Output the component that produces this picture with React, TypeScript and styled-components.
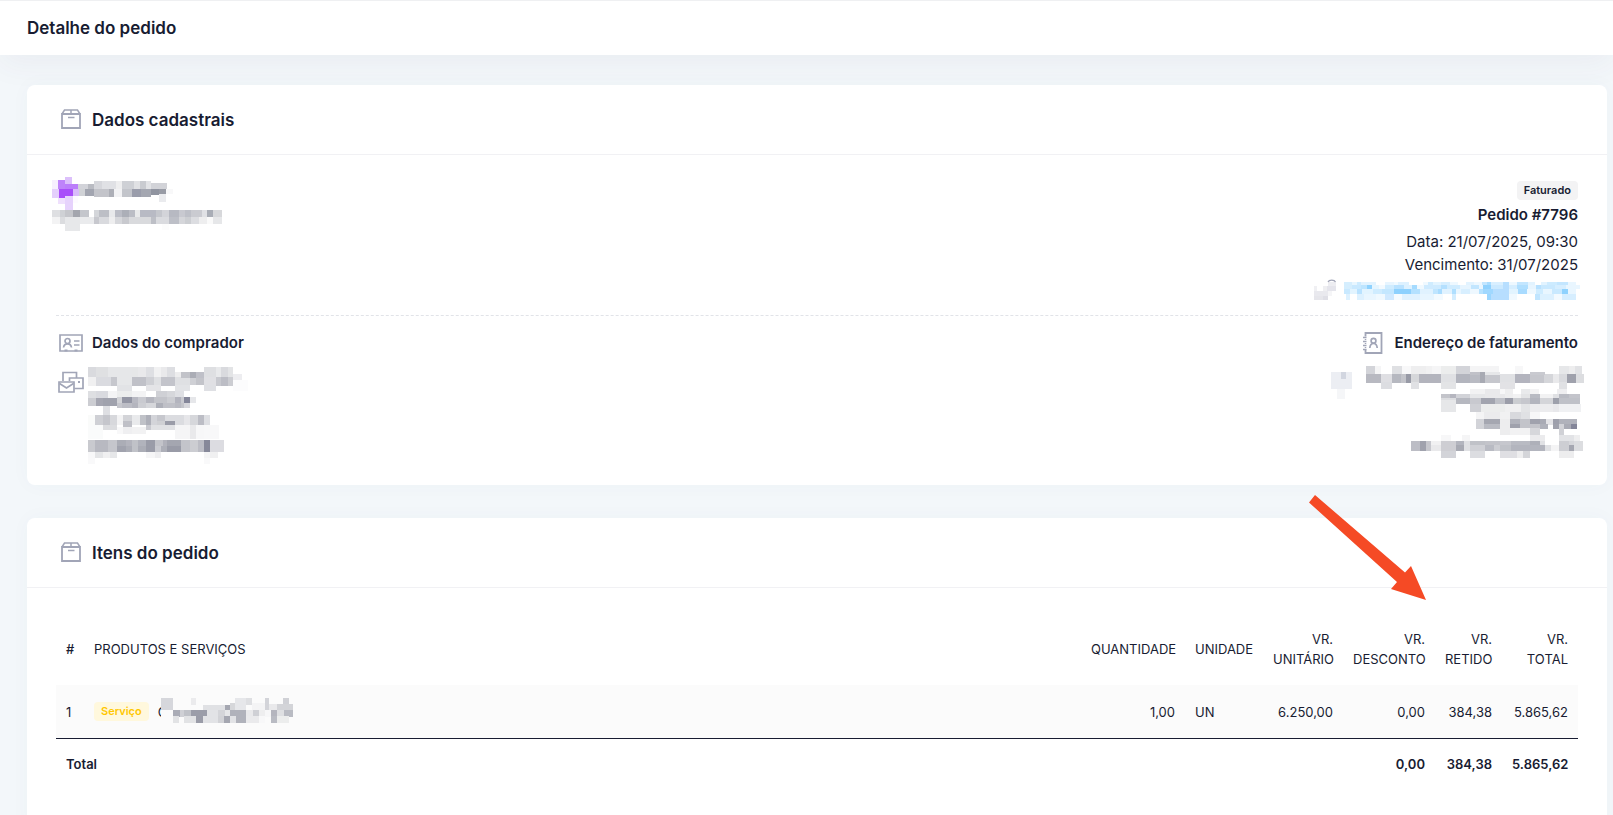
import React from "react";
import styled, { createGlobalStyle } from "styled-components";

const ink = "#181c32";
const iconColor = "#a1a5b7";

const GlobalStyle = createGlobalStyle`
  * { box-sizing: border-box; }
  body {
    margin: 0;
    background: #f3f7fa;
    color: ${ink};
    font-family: Inter, "Liberation Sans", sans-serif;
    font-size: 13px;
    line-height: 20px;
  }
  h1, h2, h3, p { margin: 0; }
`;

const PageHeader = styled.header`
  display: flex;
  align-items: center;
  height: 55px;
  padding: 0 27px;
  border-top: 1px solid #eff0f2;
  background: #fff;
  box-shadow: 0 10px 30px rgba(82, 63, 105, 0.05);
`;

const PageTitle = styled.h1`
  font-size: 17px;
  line-height: 24px;
  font-weight: 600;
`;

const Content = styled.main`
  display: flex;
  flex-direction: column;
  gap: 33px;
  padding: 30px 6px 0 27px;
`;

const Card = styled.section`
  position: relative;
  background: #fff;
  border-radius: 8px;
  box-shadow: 0 0 20px rgba(76, 87, 125, 0.03);
`;

const CardHeader = styled.div`
  display: flex;
  align-items: center;
  gap: 6px;
  height: 70px;
  padding: 0 29px;
  border-bottom: 1px solid #f1f1f4;
`;

const CardTitle = styled.h2`
  font-size: 17px;
  line-height: 24px;
  font-weight: 600;
`;

const CardBody = styled.div<{ $top: number; $bottom: number }>`
  padding: ${(p) => p.$top}px 29px ${(p) => p.$bottom}px;
`;

const IconSlot = styled.span`
  display: flex;
  flex: none;
  align-items: center;
  justify-content: center;
  width: 30px;
  height: 30px;
`;

const Summary = styled.div`
  display: flex;
  justify-content: space-between;
  padding-bottom: 15px;
  border-bottom: 1px dashed #e1e3e8;
`;

const Company = styled.div`
  margin-left: -4px;
`;

const OrderInfo = styled.div`
  display: flex;
  flex-direction: column;
  align-items: flex-end;
  gap: 3px;
  padding-top: 4px;
`;

const OrderNumber = styled.h3`
  font-size: 15px;
  line-height: 24px;
  font-weight: 600;
`;

const OrderDates = styled.p`
  font-size: 15px;
  line-height: 23px;
  text-align: right;
`;

const Badge = styled.span<{ $tone: "neutral" | "warning" }>`
  display: inline-block;
  padding: 0 7px;
  border-radius: 4px;
  font-size: 11px;
  line-height: 19px;
  font-weight: 600;
  color: ${(p) => (p.$tone === "warning" ? "#ffc700" : ink)};
  background: ${(p) => (p.$tone === "warning" ? "#fff8dd" : "#f3f3f4")};
`;

const Parties = styled.div`
  display: flex;
  justify-content: space-between;
  padding-top: 12px;
`;

const Party = styled.section<{ $end?: boolean }>`
  display: flex;
  flex-direction: column;
  align-items: ${(p) => (p.$end ? "flex-end" : "flex-start")};
  gap: 8px;
`;

const PartyHeading = styled.div`
  display: flex;
  align-items: center;
  gap: 6px;
`;

const PartyTitle = styled.h3`
  font-size: 15px;
  line-height: 24px;
  font-weight: 600;
`;

const PartyDetails = styled.div`
  display: flex;
  gap: 2px;
  padding-top: 1px;
`;

const Redaction = styled.svg`
  display: block;
  flex: none;
  overflow: visible;
`;

const Table = styled.table`
  width: 100%;
  table-layout: fixed;
  border-collapse: separate;
  border-spacing: 0;
`;

const HeadCell = styled.th<{ $end?: boolean; $strong?: boolean }>`
  padding: 16px 10px;
  font-weight: ${(p) => (p.$strong ? 500 : 400)};
  text-align: ${(p) => (p.$end ? "right" : "left")};
  text-transform: uppercase;
`;

const Cell = styled.td<{ $end?: boolean }>`
  padding: 0 10px;
  text-align: ${(p) => (p.$end ? "right" : "left")};
`;

const BodyRow = styled.tr`
  height: 54px;
  background: #fbfbfb;

  ${Cell} {
    border-bottom: 1px solid ${ink};
  }
`;

const TotalRow = styled.tr`
  height: 50px;
  font-weight: 600;
`;

const TotalLabel = styled.th`
  padding: 0 10px;
  font-weight: 600;
  text-align: left;
`;

const Product = styled.div`
  display: flex;
  align-items: center;
`;

const ProductName = styled.span`
  display: flex;
  align-items: center;
  margin-left: 9px;
`;

const NameCover = styled.span`
  margin-left: -6px;
`;

const Arrow = styled.svg`
  position: absolute;
  top: -23px;
  right: 181px;
`;

/* A band is [top, height, runs]; a run is "x colour", with "-" for a gap and a last x that closes the band. */
type Band = [number, number, string];

function Mosaic({ width, height, bands, children }: { width: number; height: number; bands: Band[]; children?: React.ReactNode }) {
  return (
    <Redaction width={width} height={height} viewBox={`0 0 ${width} ${height}`} shapeRendering="crispEdges" aria-hidden="true">
      {bands.flatMap(([y, h, runs], b) => {
        const parts = runs.split(",").map((r) => r.trim().split(" "));
        return parts.slice(0, -1).map(([x, color], i) =>
          color && color !== "-" ? (
            <rect key={`${b}-${i}`} x={x} y={y} width={Number(parts[i + 1][0]) - Number(x)} height={h} fill={`#${color}`} />
          ) : null
        );
      })}
      {children}
    </Redaction>
  );
}

const companyBands: Band[] = [
  [0, 7, "13 dcc0fb,20"],
  [3, 9, "0 f6effe,6 be83fa,13"],
  [7, 5, "13 bb7efa,26 d2d3d9,36 b9bbc2,42"],
  [4, 8, "42 d6d7dc,50 e0e1e5,64 eeeeef,70 ced0d5,82 e0e1e4,88 c9cbd0,94 e2e3e6,99"],
  [6, 6, "99 d2d3d8,115"],
  [12, 9, "0 e4cffc,7 a94dfa,21"],
  [12, 7, "21 d9bbfa,27 d0d2d6,33 a2a5b0,42"],
  [12, 8, "42 c3c4ca,57 adafb7,62 f2f2f4,70 c3c5cb,80 9a9dab,89 a4a7b1,99"],
  [12, 6, "99 9094a0,107"],
  [12, 5, "107 989ba5,114 f8f8f9,121"],
  [17, 8, "107 eaebee,114"],
  [21, 6, "6 efe0fd,13"],
  [19, 14, "13 e6d2fc,21"],
  [19, 7, "21 fdfaff,26"],
  [33, 8, "0 dedfe2,8 cfd1d5,13 c5c6cb,21 a4a6ae,28 c4c6cc,37 -,42 d4d6da,47 bdbfc6,57 e8e9eb,63 bbbdc6,70 acafb8,77 bbbdc5,83 e9eaeb,88 b8bac4,104 c5c7cd,110 d3d4d9,117 b7b9c2,127 c8c9d0,133 bec0c8,139 cacbd1,150 e0e1e5,155 a9adb6,161 d7d8db,170"],
  [40, 7, "0 f3f3f4,8 dbdcdf,13 e7e8ea,28 eaebed,42 c7c8ce,47 d9dade,57 eeeeef,63 d6d7db,70 c8c9ce,77 d9dadd,99 bdbfc6,104 dadbdf,117 bdbfc7,127 d5d6da,133 ccced2,139 dcdde1,147 eeeeef,155 fafafa,161 e6e7e9,170"],
  [47, 7, "13 e7e8ea,28"],
  [47, 6, "110 fcfcfc,117"],
];

const linkBands: Band[] = [
  [7, 5, "0 f0f0f3,3 -,9 efeff2,13 e5e5ec,22"],
  [3, 4, "14 ededf1,22"],
  [12, 5, "0 e9e9ee,14 f5f5f7,18"],
  [17, 4, "0 e6e6eb,9 dfdfe6,14"],
  [3, 3, "30 d5eefe,38 e8f6ff,43 cdebff,47 e2f3ff,62 -,71 e7f5ff,80 f0f9ff,84 ddf1ff,95 -,109 f0f9ff,114 cfecff,119 e3f4ff,127 d6eeff,136 eef8ff,144 -,152 e2f3ff,160 eef8ff,168 c3e6ff,173 a8dcff,177 d9efff,189 b7dfff,195 eef8ff,203 c3e6ff,214 e2f3ff,221 -,227 e2f3ff,233 cdebff,243 c3e6ff,254 e9f6ff,262"],
  [6, 4, "30 d5eefe,38 c9e9ff,47 bde5ff,53 8fd2fe,58 e5f5ff,65 f3faff,71 cfecff,80 b9e2ff,90 ddf1ff,98 a5dbff,103 f0f9ff,110 cfebff,127 b4e0ff,133 d0ecff,146 e7f5ff,157 c2e6ff,165 eaf6ff,169 90d2fe,177 cbe9ff,189 b7deff,195 d6eeff,203 b0dfff,214 e7f5ff,222 b8e1ff,227 c9e9ff,241 d6eeff,252 e9f6ff,266"],
  [10, 5, "30 c9e9ff,36 e2f4ff,43 b9e2ff,48 e2f4ff,59 cfecff,68 c3e7ff,80 8dd1fe,97 b4e1ff,106 e0f2ff,119 bfe5ff,124 a9dcff,128 e0f2ff,138 afdfff,142 e9f6ff,147 d8efff,156 eef8ff,165 b6e2ff,169 a0d8ff,179 b7deff,195 e2f4ff,204 a8dbff,213 eef8ff,222 cfecff,229 e9f6ff,238 c9e9ff,248 8fd2fe,254 e9f6ff,262"],
  [15, 6, "32 ddf1ff,36 -,43 ddf1ff,50 e9f6ff,62 f0f9ff,71 d0e9ff,80 f5fbff,88 e0f2ff,106 e7f5ff,120 f3faff,129 -,138 d3edff,142 -,173 9bd6ff,177 b7deff,195 f0f9ff,203 -,221 c0e5ff,226 ddf1ff,240 f3faff,248 d6eeff,262"],
];

const buyerBands: Band[] = [
  [0, 10, "0 d9dade,8 dfe0e2,20 e6e7e9,44 e6e7e8,50 e9e9eb,58 dedfe3,66 f1f1f2,73 e9e9eb,79 dddee2,87 -,116 dedfe2,128 e8e9eb,133 d9dade,140 e3e4e6,145"],
  [5, 6, "87 ededee,93 c2c3c9,102 abadb6,108 bfc0c8,116"],
  [13, 11, "145 fcfcfd,160"],
  [7, 6, "145 ededf0,154"],
  [10, 9, "0 f0f0f1,8 dadbe0,23 c6c7cd,29 e6e7e9,44 c0c1c8,58 cfd0d5,66 dfe0e3,73 c3c4cb,87 dfe0e3,93 -,116 e0e0e4,128 c8c9cf,133 bcbdc5,140 cccdd2,145"],
  [11, 7, "87 dfe0e3,102 cfd0d5,108 c3c4ca,116"],
  [18, 6, "29 e2e3e6,44 -,58 e4e4e7,73 -,87 e2e3e6,102 -,116 dfe0e4,128"],
  [24, 7, "0 dedfe2,8 d9dadf,20 f4f4f5,29 eceded,44 f3f3f4,58 -,68 cfd0d5,79 d6d7db,87 dfe0e4,96"],
  [31, 8, "0 cccdd2,8 a5a6b1,15 a0a2ad,29 c6c7cd,34 bcbdc5,44"],
  [30, 6, "29 d2d3d7,34 9496a4,44 b8b9c2,50 c9cad0,58 b5b6bf,66 c3c4ca,79 cccdd2,87 b3b4be,93 c9cad0,96 848699,102 e6e7ea,108"],
  [36, 5, "29 c6c7cd,34 bcbdc5,44 b4b5be,50 cdced3,58 d6d7db,68 adafb8,75 bfc0c7,87 b9bac2,93 c3c4ca,96 d6d6db,102"],
  [39, 9, "15 dedfe3,22"],
  [48, 10, "0 fafbfa,7 cfd0d5,15 c5c6cc,22 d7d8dc,29 f3f3f4,35 d3d4d8,44 e9eaec,52 c0c2c8,58 aeb0b9,63 d3d4d9,69 c6c7cd,77 dbdce0,87 dbdce0,96 e6e6e9,102 d6d7db,110 bcbdc5,116 dedfe3,122"],
  [54, 6, "35 bfc0c7,44 -,69 cfd0d4,77 9a9ca8,87"],
  [58, 5, "15 dcdde0,29 -,58 c9cad0,63 e0e1e4,87"],
  [58, 14, "0 fafbfb,15 -,87 f5f5f6,102 e9e9eb,108 f7f7f8,116 f8f8f9,131"],
  [60, 7, "29 f8f8f9,35 efeff1,44 f2f2f3,58"],
  [73, 6, "0 c9cacf,7 b8b9c1,20 c5c6cc,29 abadb6,38 b3b4bd,44 c0c2c8,50 b1b3bc,58 9a9ca8,67 c3c4ca,75 b1b2bb,79 a4a6b0,93 c3c4ca,102 cccdd2,110 bcbdc5,116 868899,122 dcdce1,136"],
  [79, 6, "0 c9cacf,7 b8b9c1,20 c5c6cc,29 a1a3ae,38 abadb6,44 c0c2c8,50 abadb6,58 9a9ca8,67 c9cad0,73 adafb8,79 999ba7,93 c3c4ca,102 cccdd2,110 bcbdc5,116 868899,122 dcdce1,136"],
  [85, 6, "0 f8f8f9,7 e4e5e7,15 f0f0f1,22 e6e7e9,29 -,58 f6f6f7,67 eeeef0,73 -,116 f4f4f5,122 f0f0f1,130"],
  [91, 6, "0 f9f9fa,7 -,116 f9f9fa,122"],
];

const addressBands: Band[] = [
  [6, 17, "0 eceef3,21"],
  [6, 7, "10 d2d6e0,15"],
  [23, 10, "6 f5f6f8,14"],
  [0, 9, "35 d3d4d9,44 f5f5f6,50 -,61 dfe0e3,71 f8f8f9,80 eeeeef,95 f1f1f2,101 f5f5f6,110 eceded,125 d3d4d9,139 f4f4f5,168 -,184 f7f7f8,192 -,228 e6e7e9,238 ededee,244 e1e2e5,251"],
  [8, 9, "35 b8b9c1,50 dfdfe3,61 b6b8c0,70 c3c4ca,75 989aa6,80 d6d7da,88 b3b4bd,110 e0e1e4,125 b3b5be,139 b9bbc3,149 a8aab3,154 c6c7cd,169 e0e1e4,184 b3b4be,199 c6c7cd,213 d5d6da,222 e9e9eb,228 d9dade,236 9fa1ac,245 dcdde0,253"],
  [6, 3, "139 c0c1c8,149 a8aab3,154 e6e7e9,169 -,199 c9cad0,214"],
  [16, 7, "50 dcdde1,61 -,80 e0e1e4,88 -,110 e3e4e6,125 -,169 e2e2e5,184 -,228 e0e1e4,236"],
  [23, 5, "139 f2f2f3,154 e9e9eb,169 f7f7f8,174 eeeeef,182 -,190 e9eaec,199 f3f3f4,208 -,226 eeeef0,236"],
  [28, 5, "110 c3c4ca,119 b5b6bf,125 d2d3d8,139 e6e7e9,154 e9e9eb,174 eeeeef,182 f2f2f3,190 e3e4e6,199 b9bbc3,209 f2f2f3,222 e0e1e4,228 b9bbc3,238 c3c4cb,249"],
  [32, 6, "110 dcdde0,125 b6b8c0,139 c8c9cf,150 a2a4af,164 bfc1c8,174 9b9da9,182 cbcdd1,190 c6c7cd,199 b3b5be,209 d4d5d9,222 9da0ab,228 bfc1c8,249"],
  [34, 12, "110 e6e7e9,125"],
  [38, 8, "139 cfd0d5,150 eceded,174 f0f0f1,190 e3e4e6,199 ececee,222 e8e8eb,228 f0f1f3,250"],
  [46, 8, "145 f4f4f5,153 ebebed,169 f1f1f2,179 d8d9dd,190 e0e1e4,199 f7f7f8,209"],
  [53, 6, "145 d2d3d8,153 a5a7b1,169 ededee,179 b0b2bb,189 c3c4ca,199 a0a2ad,209 a9abb5,215 e4e4e7,222 9ea0ac,228 b0b2bb,246"],
  [58, 5, "145 d2d3d8,153 b9bbc3,169 ededee,179 9fa1ac,189 c3c4ca,199 c3c4ca,209 b0b2bb,217 -,222 a0a2ad,228 d2d3d8,233 a9abb5,240 848699,246"],
  [62, 7, "169 ededee,179 f2f2f3,199 d6d7db,209 -,228 d0d1d6,233"],
  [69, 6, "110 f7f7f8,120 -,131 f5f5f6,139 -,199 ebebed,214 -,228 e2e3e6,243 eeeeef,249"],
  [75, 6, "80 bcbdc5,89 a0a2ad,95 c6c7cd,100 f1f1f2,110 ceced3,125 b3b5be,133 e0e1e4,139 c0c2c8,154 c3c4ca,169 c6c7cd,180 b9bbc3,199 aeb0b9,209 e0e1e4,214 -,228 cdced3,238 d6d7db,243 dcdde0,252"],
  [79, 6, "80 bcbdc5,89 a0a2ad,95 c6c7cd,100 e9e9eb,110 ceced3,125 a8aab3,133 e0e1e4,139 d0d1d6,154 b9bbc3,163 cdced3,169 c0c2c8,180 b3b5be,199 b3b5be,214 e0e1e4,220 f4f4f5,228 cdced3,238 a5a7b1,243 dcdde0,252"],
  [85, 7, "110 d3d4d9,125 -,139 dcdde1,154 -,169 dfdfe3,186 eeeeef,192 d4d5d9,199 -,228 ededee,243"],
];

const productBands: Band[] = [
  [0, 12, "0 d6d7dc,12"],
  [12, 9, "0 fbfbfb,12"],
  [0, 7, "30 ebebed,35 -,74 e6e7ea,85 dedfe2,91"],
  [0, 10, "104 d3d4d9,108 -,122 d0d1d6,128"],
  [7, 7, "42 e0e1e4,64 a5a7b1,69 e2e3e6,85"],
  [5, 7, "69 d6d7da,74 e6e7ea,85 -,91 f4f4f5,104"],
  [6, 6, "104 d3d4d9,108 e9e9eb,116 d3d4d8,132"],
  [12, 7, "12 aaacb6,19 cfd0d5,23 c0c2c8,30 9b9da9,46 e2e3e6,57 d4d5d9,64 e6e7e9,69 b0b2bb,85 e9e9eb,92 cfd0d5,98 eeeeef,104 f7f7f8,110 b4b5be,116 dedfe2,123 b9bbc3,132"],
  [18, 7, "12 e2e3e5,18 -,23 e2e3e5,35 9a9ca8,42 e2e3e6,57 d2d3d7,63 a5a7b1,69 e2e3e6,75 b0b2bb,85 eaeaec,98 f8f8f9,104 -,110 b9bbc3,116 eceded,128"],
];

const PackageIcon = () => (
  <svg width="22" height="22" viewBox="0 0 22 22" fill="none" stroke={iconColor} strokeWidth="2" aria-hidden="true">
    <path d="M2 5v14h18V5z" strokeWidth="1.800" />
    <path d="M2 5l2.500-4h13L20 5M11 1v4" strokeWidth="1.500" />
    <path d="M8 8.500h6.500" strokeWidth="1.500" />
  </svg>
);

const IdCardIcon = () => (
  <svg width="26" height="20" viewBox="0 0 26 20" fill="none" stroke={iconColor} strokeWidth="1.700" aria-hidden="true">
    <path d="M2 2h22v16H2z" />
    <circle cx="9.500" cy="8" r="2.500" />
    <path d="M5.500 14.500c.3-2.200 1.800-3.700 4-3.700s3.700 1.500 4 3.700M16 8h5.500M16 12h5.500" />
    <path d="M6.500 17.500h3M16.500 17.500h3" strokeWidth="2" />
  </svg>
);

const MailboxIcon = () => (
  <svg width="26" height="22" viewBox="0 0 26 22" fill="none" stroke={iconColor} strokeWidth="1.700" aria-hidden="true">
    <path d="M5 10V1.500h13.500V7" />
    <path d="M11.500 10V7H25v10.500h-8.500" />
    <path d="M1 11h15v10H1z" />
    <path d="M1.500 12.500l7 4.500 7-4.500" />
    <path d="M20 11h2" strokeWidth="2" />
  </svg>
);

const AddressBookIcon = () => (
  <svg width="20" height="22" viewBox="0 0 20 22" fill="none" stroke={iconColor} aria-hidden="true">
    <path d="M2.500 4.500V1H18.500v20H2.500v-3.500" strokeWidth="1.800" />
    <path d="M0 5.500h3.500M0 9.500h3.500M0 13.500h3.500M0 17.500h3.500" strokeWidth="1.500" />
    <path d="M2.500 8v-1M2.500 12v-1M2.500 16v-1" strokeWidth="1.500" />
    <circle cx="10.500" cy="8.800" r="2.400" strokeWidth="1.700" />
    <path d="M6.800 16c.2-2.600 1.500-4.500 3.700-4.500s3.500 1.900 3.700 4.500" strokeWidth="1.700" />
  </svg>
);

export default function App() {
  return (
    <>
      <GlobalStyle />
      <PageHeader>
        <PageTitle>Detalhe do pedido</PageTitle>
      </PageHeader>
      <Content>
        <Card>
          <CardHeader>
            <IconSlot><PackageIcon /></IconSlot>
            <CardTitle>Dados cadastrais</CardTitle>
          </CardHeader>
          <CardBody $top={22} $bottom={21}>
            <Summary>
              <Company>
                <Mosaic width={170} height={54} bands={companyBands} />
              </Company>
              <OrderInfo>
                <Badge $tone="neutral">Faturado</Badge>
                <OrderNumber>Pedido #7796</OrderNumber>
                <OrderDates>
                  Data: 21/07/2025, 09:30
                  <br />
                  Vencimento: 31/07/2025
                </OrderDates>
                <Mosaic width={264} height={21} bands={linkBands}>
                  <path d="M14 3c1-2.500 6.500-2.500 7.500 0" fill="none" stroke={iconColor} strokeWidth="1.200" shapeRendering="auto" />
                </Mosaic>
              </OrderInfo>
            </Summary>
            <Parties>
              <Party>
                <PartyHeading>
                  <IconSlot><IdCardIcon /></IconSlot>
                  <PartyTitle>Dados do comprador</PartyTitle>
                </PartyHeading>
                <PartyDetails>
                  <IconSlot><MailboxIcon /></IconSlot>
                  <Mosaic width={160} height={97} bands={buyerBands} />
                </PartyDetails>
              </Party>
              <Party $end>
                <PartyHeading>
                  <IconSlot><AddressBookIcon /></IconSlot>
                  <PartyTitle>Endereço de faturamento</PartyTitle>
                </PartyHeading>
                <Mosaic width={247} height={92} bands={addressBands} />
              </Party>
            </Parties>
          </CardBody>
        </Card>

        <Card>
          <CardHeader>
            <IconSlot><PackageIcon /></IconSlot>
            <CardTitle>Itens do pedido</CardTitle>
          </CardHeader>
          <CardBody $top={25} $bottom={40}>
            <Table>
              <colgroup>
                <col width="28" />
                <col />
                <col width="104" />
                <col width="78" />
                <col width="80" />
                <col width="92" />
                <col width="67" />
                <col width="76" />
              </colgroup>
              <thead>
                <tr>
                  <HeadCell $strong>#</HeadCell>
                  <HeadCell>Produtos e serviços</HeadCell>
                  <HeadCell $end>Quantidade</HeadCell>
                  <HeadCell>Unidade</HeadCell>
                  <HeadCell $end>Vr. unitário</HeadCell>
                  <HeadCell $end>Vr. desconto</HeadCell>
                  <HeadCell $end>Vr. retido</HeadCell>
                  <HeadCell $end>Vr. total</HeadCell>
                </tr>
              </thead>
              <tbody>
                <BodyRow>
                  <Cell>1</Cell>
                  <Cell>
                    <Product>
                      <Badge $tone="warning">Serviço</Badge>
                      <ProductName>
                        C
                        <NameCover>
                          <Mosaic width={132} height={27} bands={productBands} />
                        </NameCover>
                      </ProductName>
                    </Product>
                  </Cell>
                  <Cell $end>1,00</Cell>
                  <Cell>UN</Cell>
                  <Cell $end>6.250,00</Cell>
                  <Cell $end>0,00</Cell>
                  <Cell $end>384,38</Cell>
                  <Cell $end>5.865,62</Cell>
                </BodyRow>
              </tbody>
              <tfoot>
                <TotalRow>
                  <TotalLabel scope="row" colSpan={5}>Total</TotalLabel>
                  <Cell $end>0,00</Cell>
                  <Cell $end>384,38</Cell>
                  <Cell $end>5.865,62</Cell>
                </TotalRow>
              </tfoot>
            </Table>
          </CardBody>
          <Arrow width="117" height="105" viewBox="0 0 117 105" aria-hidden="true">
            <path d="M6 0L96 77.500L102 71L117 105L82 94L88 87L0 7.500z" fill="#f54a25" />
          </Arrow>
        </Card>
      </Content>
    </>
  );
}
